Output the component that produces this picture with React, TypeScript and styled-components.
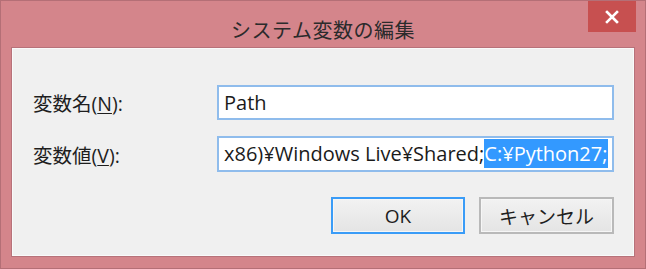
import React from "react";
import styled, { createGlobalStyle } from "styled-components";

const GlobalStyle = createGlobalStyle`
    html, body {
        margin: 0;
        padding: 0;
        background: #ffffff;
    }
    body {
        font-family: "Open Sans", "Noto Sans CJK JP", sans-serif;
    }
`;

const UI_FONT = `"Open Sans", "Noto Sans CJK JP", sans-serif`;

const DialogWindow = styled.div`
    width: 646px;
    height: 269px;
    box-sizing: border-box;
    border: 1px solid #b46f76;
    background: #d4858b;
    display: flex;
    flex-direction: column;
    padding: 0 10px 11px 10px;
`;

const TitleBar = styled.div`
    height: 46px;
    display: grid;
    grid-template-columns: 48px 1fr 48px;
    align-items: start;
`;

const TitleText = styled.div`
    grid-column: 2;
    text-align: center;
    padding-top: 16px;
    font-family: "Noto Sans CJK JP", sans-serif;
    font-size: 20px;
    line-height: 26px;
    color: #2b2b2b;
    letter-spacing: 0.5px;
`;

const CloseButton = styled.button`
    grid-column: 3;
    width: 48px;
    height: 31px;
    margin-left: 1px;
    border: none;
    padding: 0;
    background: #c75050;
    display: flex;
    align-items: center;
    justify-content: center;
    cursor: pointer;
`;

const ClientArea = styled.div`
    flex: 1;
    border: 1px solid #b7727a;
    box-shadow: inset 0 0 0 1px #fafafa;
    background: #f0f0f0;
    padding: 37px 20px 0 20px;
    display: flex;
    flex-direction: column;
`;

const FieldGrid = styled.div`
    display: grid;
    grid-template-columns: 185px 1fr;
    row-gap: 16px;
    align-items: center;
`;

const FieldLabel = styled.label`
    font-family: ${UI_FONT};
    font-size: 19.5px;
    color: #1e1e1e;
    padding-left: 1px;

    u {
        text-decoration: underline;
        text-underline-offset: 2px;
    }
`;

const TextBox = styled.div<{ $height: number }>`
    height: ${({ $height }) => $height}px;
    box-sizing: border-box;
    border: 2px solid #8fbcec;
    background: #ffffff;
    padding: 1px 4px 0 5px;
    font-family: ${UI_FONT};
    font-size: 20px;
    line-height: 29px;
    color: #1a1a1a;
    white-space: nowrap;
    overflow: hidden;
`;

const Selected = styled.span`
    display: inline-block;
    background: #3399ff;
    color: #ffffff;
    line-height: 29px;
`;

const ButtonRow = styled.div`
    display: flex;
    justify-content: flex-end;
    gap: 14px;
    margin-top: 25px;
`;

const DialogButton = styled.button<{ $default?: boolean }>`
    width: ${({ $default }) => ($default ? 134 : 135)}px;
    height: 37px;
    box-sizing: border-box;
    border: ${({ $default }) => ($default ? "2px solid #3a9cf7" : "2px solid #b9b9b9")};
    box-shadow: inset 0 0 0 1px #f6f6f6;
    background: linear-gradient(#f2f2f2, #e4e4e4);
    font-family: ${UI_FONT};
    font-size: 19px;
    color: #1e1e1e;
    padding: 0;
    cursor: pointer;
`;

const CancelLabel = styled.span`
    font-family: "Noto Sans CJK JP", sans-serif;
`;

export default function App() {
    return (
        <>
            <GlobalStyle />
            <DialogWindow>
                <TitleBar>
                    <TitleText>システム変数の編集</TitleText>
                    <CloseButton aria-label="閉じる">
                        <svg width="14" height="14" viewBox="0 0 14 14">
                            <path d="M2 2 L12 12 M12 2 L2 12" stroke="#ffffff" strokeWidth="2.6" strokeLinecap="square" />
                        </svg>
                    </CloseButton>
                </TitleBar>
                <ClientArea>
                    <FieldGrid>
                        <FieldLabel>
                            変数名(<u>N</u>):
                        </FieldLabel>
                        <TextBox $height={35}>Path</TextBox>
                        <FieldLabel>
                            変数値(<u>V</u>):
                        </FieldLabel>
                        <TextBox $height={36}>
                            x86)¥Windows Live¥Shared;<Selected>C:¥Python27;</Selected>
                        </TextBox>
                    </FieldGrid>
                    <ButtonRow>
                        <DialogButton $default>OK</DialogButton>
                        <DialogButton>
                            <CancelLabel>キャンセル</CancelLabel>
                        </DialogButton>
                    </ButtonRow>
                </ClientArea>
            </DialogWindow>
        </>
    );
}
